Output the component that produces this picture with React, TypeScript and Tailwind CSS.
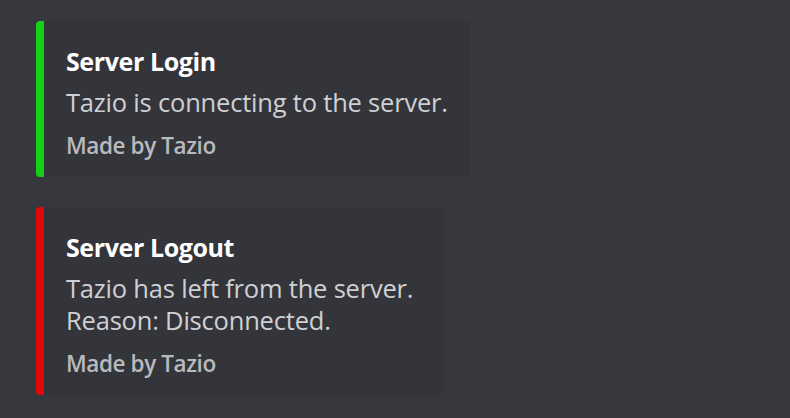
import React from 'react';

type EmbedProps = {
  color: string;
  title: string;
  lines: string[];
  footer: string;
  width: string;
};

const Embed: React.FC<EmbedProps> = ({ color, title, lines, footer, width }) => (
  <div className={`flex ${width}`}>
    <div className={`w-[8px] shrink-0 rounded-l-[4px] ${color}`} />
    <div className="flex-1 bg-[#34353a] pl-[22px] pr-4 pt-[25px] pb-[18px]">
      <div className="text-[25px] font-bold leading-[30px] text-white tracking-[-0.4px]">{title}</div>
      <div className="mt-[10px] text-[25.5px] leading-[32px] text-[#cfd0d3] tracking-[-0.2px]">
        {lines.map((l) => (
          <div key={l}>{l}</div>
        ))}
      </div>
      <div className="mt-[15px] text-[22.5px] font-semibold leading-[26px] text-[#b9babe] tracking-[-0.4px]">{footer}</div>
    </div>
  </div>
);

export default function App() {
  return (
    <div
      className="h-[418px] w-[790px] overflow-hidden bg-[#37383e] pl-[36px] pt-[21px]"
      style={{ fontFamily: '"Open Sans", "Noto Sans", sans-serif' }}
    >
      <div className="flex flex-col gap-[30px]">
        <Embed
          color="bg-[#16d016]"
          title="Server Login"
          lines={['Tazio is connecting to the server.']}
          footer="Made by Tazio"
          width="w-[434px]"
        />
        <Embed
          color="bg-[#e00808]"
          title="Server Logout"
          lines={['Tazio has left from the server.', 'Reason: Disconnected.']}
          footer="Made by Tazio"
          width="w-[407px]"
        />
      </div>
    </div>
  );
}
